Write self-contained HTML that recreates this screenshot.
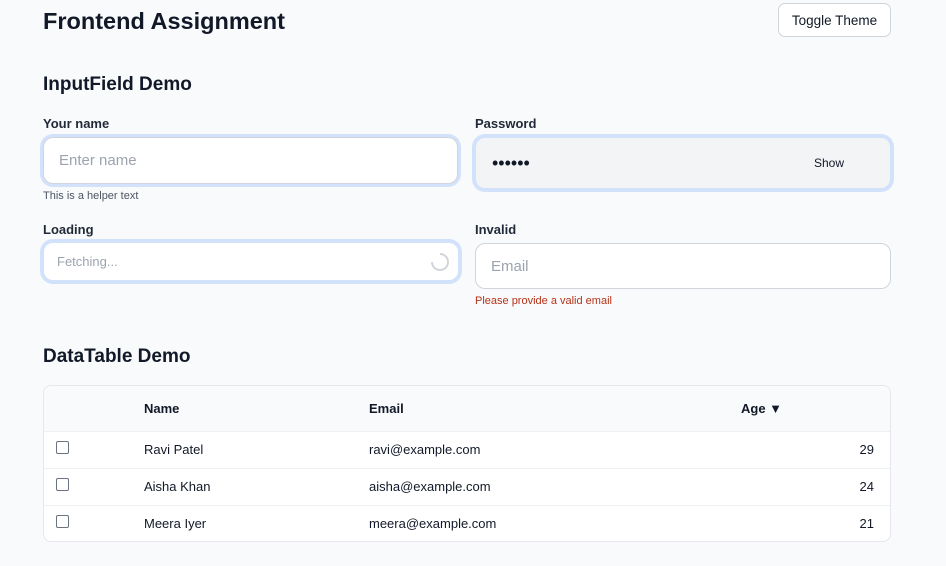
<!DOCTYPE html>
<html><head><style>
*{box-sizing:border-box;margin:0;padding:0}
body{width:946px;height:566px;background:#f9fafb;font-family:"Liberation Sans",sans-serif;color:#111827;position:relative;overflow:hidden}
.a{position:absolute}
h1{position:absolute;left:43px;top:8px;font-size:23.5px;font-weight:bold}
.btn{left:778px;top:3px;width:113px;height:34px;border:1px solid #d1d5db;border-radius:7px;background:#fff;font-size:13.5px;display:flex;align-items:center;justify-content:center}
h2{position:absolute;left:43px;font-size:19px;font-weight:600}
.lbl{font-size:13px;font-weight:bold;color:#1f2937}
.inp{border-radius:10px;border:1px solid #d1d5db;background:#fff;box-shadow:0 0 0 3px #d3e2fb;display:flex;align-items:center;color:#9ca3af}
.sm{font-size:11px;color:#4b5563}
table{border-collapse:collapse;width:100%;font-size:13px}
td,th{height:37px;padding:0}
th{text-align:left;font-weight:bold;height:45px;background:#f9fafb}
tr+tr td{border-top:1px solid #eef0f2}
.cb{display:inline-block;width:13px;height:13px;border:1px solid #6b7280;border-radius:2px;background:#fff;margin-left:12px;vertical-align:middle;position:relative;top:-3px}
</style></head><body>
<h1>Frontend Assignment</h1>
<div class="a btn">Toggle Theme</div>
<h2 style="top:74px">InputField Demo</h2>
<div class="a lbl" style="left:43px;top:116px">Your name</div>
<div class="a inp" style="left:43px;top:137px;width:415px;height:47px;padding-left:15px;font-size:15px">Enter name</div>
<div class="a sm" style="left:43px;top:190px">This is a helper text</div>
<div class="a lbl" style="left:43px;top:222px">Loading</div>
<div class="a inp" style="left:43px;top:242px;width:416px;height:39px;padding-left:13px;font-size:13px;border-color:#d3e2fb">Fetching...
<svg class="a" style="left:386px;top:9px" width="20" height="20" viewBox="0 0 20 20"><path d="M10 2A8 8 0 1 1 2 10" fill="none" stroke="#d1d5db" stroke-width="2"/></svg></div>
<div class="a lbl" style="left:475px;top:116px">Password</div>
<div class="a inp" style="left:475px;top:137px;width:416px;height:52px;background:#f3f4f6;border-color:#d3e2fb;padding-left:16px;color:#111827;font-size:18px;letter-spacing:0">••••••<span class="a" style="left:338px;font-size:12px;letter-spacing:0">Show</span></div>
<div class="a lbl" style="left:475px;top:222px">Invalid</div>
<div class="a inp" style="left:475px;top:243px;width:416px;height:46px;box-shadow:none;padding-left:15px;font-size:15px">Email</div>
<div class="a" style="left:475px;top:295px;font-size:11px;color:#b4321a">Please provide a valid email</div>
<h2 style="top:346px">DataTable Demo</h2>
<div class="a" style="left:43px;top:385px;width:848px;height:157px;border:1px solid #e5e7eb;border-radius:8px;background:#fff;overflow:hidden">
<table>
<tr><th style="width:100px"></th><th style="width:225px">Name</th><th style="width:372px">Email</th><th>Age ▼</th></tr>
<tr><td><span class="cb"></span></td><td>Ravi Patel</td><td>ravi@example.com</td><td style="text-align:right;padding-right:16px">29</td></tr>
<tr><td><span class="cb"></span></td><td>Aisha Khan</td><td>aisha@example.com</td><td style="text-align:right;padding-right:16px">24</td></tr>
<tr><td><span class="cb"></span></td><td>Meera Iyer</td><td>meera@example.com</td><td style="text-align:right;padding-right:16px">21</td></tr>
</table></div>
</body></html>
